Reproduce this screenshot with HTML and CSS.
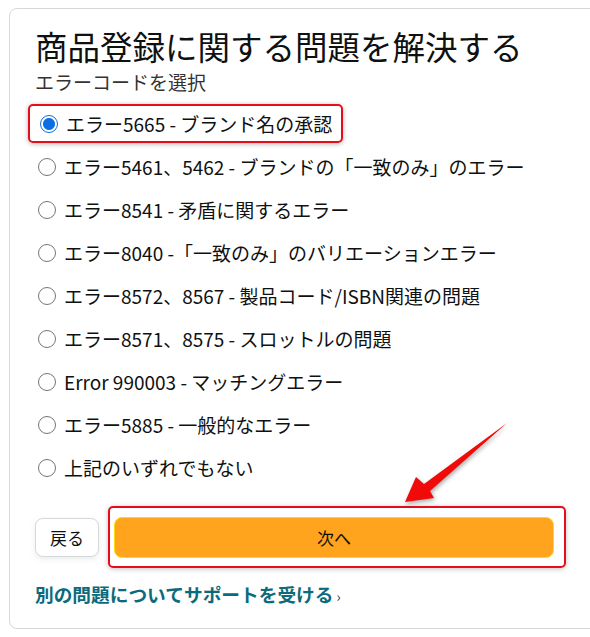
FILE: index.html
```html
<!DOCTYPE html>
<html>
<head>
    <title>商品登録に関する問題を解決する</title>
    <link rel="stylesheet" href="styles.css">
</head>
<body>
    <div class="card">
        <h1>商品登録に関する問題を解決する</h1>
        <p class="sub">エラーコードを選択</p>

        <!-- Error code list -->
        <div class="options">
            <label class="opt highlight"><span class="radio checked"></span>エラー5665 - ブランド名の承認</label>
            <label class="opt"><span class="radio"></span>エラー5461、5462 - ブランドの「一致のみ」のエラー</label>
            <label class="opt"><span class="radio"></span>エラー8541 - 矛盾に関するエラー</label>
            <label class="opt"><span class="radio"></span>エラー8040 -「一致のみ」のバリエーションエラー</label>
            <label class="opt"><span class="radio"></span>エラー8572、8567 - 製品コード/ISBN関連の問題</label>
            <label class="opt"><span class="radio"></span>エラー8571、8575 - スロットルの問題</label>
            <label class="opt"><span class="radio"></span>Error 990003 - マッチングエラー</label>
            <label class="opt"><span class="radio"></span>エラー5885 - 一般的なエラー</label>
            <label class="opt"><span class="radio"></span>上記のいずれでもない</label>
        </div>

        <!-- Buttons -->
        <div class="actions">
            <button class="btn-back">戻る</button>
            <div class="next-wrap">
                <button class="btn-next">次へ</button>
            </div>
        </div>

        <a class="help" href="#">別の問題についてサポートを受ける<span class="chev">›</span></a>
    </div>

    <!-- Annotation arrow -->
    <svg class="arrow" width="590" height="637" viewBox="0 0 590 637">
        <polygon points="405,502 416,477 424,484 507,423 430,491 434,498" fill="#f00a0a"/>
    </svg>
</body>
</html>
```

FILE: styles.css
```css
body {
    margin: 0;
    background: #fff;
    font-family: 'Noto Sans CJK JP', 'Noto Sans', sans-serif;
    color: #0f1111;
    overflow: hidden;
}

.card {
    margin: 8px 0 0 9px;
    width: 620px;
    height: 621px;
    border: 1px solid #d5d9d9;
    border-radius: 8px;
    padding: 18px 0 0 25px;
    box-sizing: border-box;
}

h1 {
    margin: 0;
    font-size: 32.5px;
    font-weight: 400;
    line-height: 38px;
}

.sub {
    margin: 5px 0 0;
    font-size: 19px;
    line-height: 24px;
    color: #333;
}

/* Options */
.options {
    display: flex;
    flex-direction: column;
    margin-top: 8px;
}
.opt {
    display: flex;
    align-items: center;
    height: 43px;
    font-size: 19px;
    padding-left: 3px;
}
.opt.highlight {
    width: 315px;
    height: 39px;
    margin: 2px 0 2px -7px;
    padding-left: 10px;
    box-sizing: border-box;
    border: 2px solid #e20e1c;
    border-radius: 5px;
    box-shadow: 0 1px 5px rgba(0,0,0,0.3);
}
.radio {
    width: 16px;
    height: 16px;
    border: 1.5px solid #767676;
    border-radius: 50%;
    margin-right: 8px;
    flex-shrink: 0;
}
.radio.checked {
    border: 1.5px solid #0b6fe3;
    background: radial-gradient(circle, #0b6fe3 5.5px, #fff 6.5px);
}

/* Buttons */
.actions {
    display: flex;
    align-items: center;
    margin-top: 17px;
}
.btn-back {
    width: 64px;
    height: 39px;
    background: #fff;
    border: 1px solid #d5d9d9;
    border-radius: 8px;
    box-shadow: 0 2px 5px rgba(213,217,217,0.5);
    font-family: inherit;
    font-size: 17px;
    color: #0f1111;
    margin-right: 9px;
}
.next-wrap {
    width: 458px;
    height: 62px;
    box-sizing: border-box;
    border: 2px solid #e20e1c;
    border-radius: 5px;
    padding: 9px 0 0 4px;
    box-shadow: 0 1px 5px rgba(0,0,0,0.25);
}
.btn-next {
    width: 440px;
    height: 41px;
    background: #ffa41c;
    border: 1px solid #ffd814;
    border-radius: 8px;
    font-family: inherit;
    font-size: 17px;
    color: #0f1111;
}

/* Help link */
.help {
    display: inline-block;
    margin-top: 12px;
    font-size: 18.7px;
    font-weight: 700;
    color: #0b6a7b;
    text-decoration: none;
}
.chev {
    font-size: 14px;
    font-weight: 400;
    margin-left: 3px;
    color: #333;
}

.arrow {
    position: absolute;
    top: 0;
    left: 0;
    filter: drop-shadow(1px 2px 2px rgba(0,0,0,0.35));
}
```
